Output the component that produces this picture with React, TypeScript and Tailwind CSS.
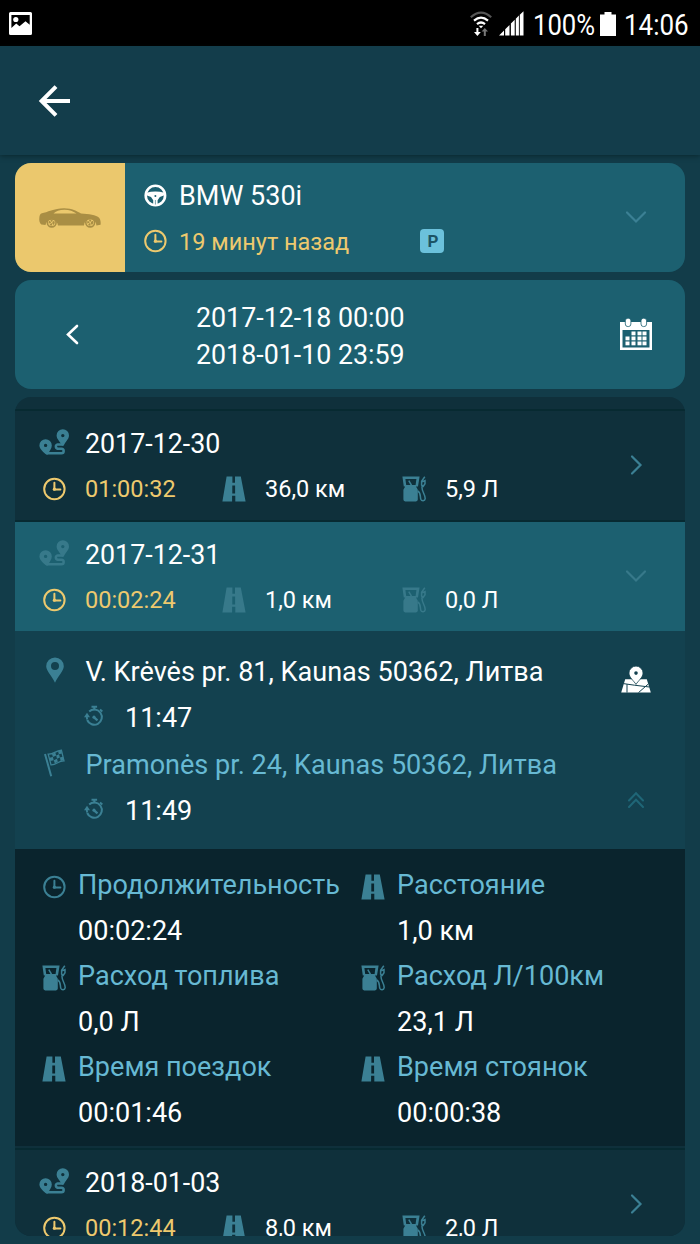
import type { ReactNode } from "react";
import clsx from "clsx";

type IconProps = { className?: string };

function ClockIcon({ className }: IconProps) {
  return (
    <svg viewBox="0 0 24 24" className={clsx("h-6 w-6", className)} fill="none" stroke="currentColor" strokeWidth="2" aria-hidden>
      <circle cx="12.4" cy="12" r="10.2" />
      <path d="M12.4 5.8v6.6h6" strokeLinecap="round" />
      <circle cx="12.4" cy="12.2" r="1.6" fill="currentColor" stroke="none" />
    </svg>
  );
}

function RoadIcon({ className }: IconProps) {
  return (
    <svg viewBox="0 0 24 26" className={clsx("h-[26px] w-6", className)} fill="currentColor" aria-hidden>
      <path d="M4.6.6h5.8v6.2H13V.6h5.8l4.8 24.8H13.3v-5.6h-3.2v5.6H.4zM10.3 9.4v8h2.8v-8z" fillRule="evenodd" />
    </svg>
  );
}

function FuelIcon({ className }: IconProps) {
  return (
    <svg viewBox="0 0 24 26" className={clsx("h-[26px] w-6", className)} aria-hidden>
      <path
        d="M.4.6h17.2l-1.6 10h-2l1.8 3.2v9.8q0 1.8-1.8 1.8H3.2q-1.8 0-1.8-1.8v-9.8l1.8-3.2h-1.4zM3.4 3l.8 6h9.4l.8-6z"
        fill="currentColor"
        fillRule="evenodd"
      />
      <path d="M6.8 4.6l2.6 4.6" stroke="currentColor" strokeWidth="1.5" />
      <path
        d="M22.8.8l-3.200 4.400v4l1.600 1.200 1.800-2.600V4.600l-2.600 1.200M20 10.400c-.6 5 3.400 8 3.200 12.200-.4 2.800-3.600 2.600-4.400.6-.8-2.400.2-6.400-3-8.200"
        fill="none"
        stroke="currentColor"
        strokeWidth="1.5"
      />
    </svg>
  );
}

function RouteIcon({ className }: IconProps) {
  return (
    <svg viewBox="0 0 30 26" className={clsx("h-[26px] w-[30px]", className)} aria-hidden>
      <path
        d="M6.6 10.200a6.200 6.200 0 0 1 6.200 6.200c0 3.200-2.400 5.400-4 9.200H7.400C5.200 24 .4 19.900.4 16.400a6.200 6.200 0 0 1 6.200-6.200zm0 4.500a1.700 1.700 0 1 0 0 3.400 1.700 1.700 0 0 0 0-3.400z"
        fill="currentColor"
        fillRule="evenodd"
      />
      <path
        d="M23.800.2A6.200 6.200 0 0 1 30 6.400c0 3.800-3.800 6.200-5.400 10.400H23c-1.600-4.200-5.400-6.600-5.400-10.400A6.200 6.200 0 0 1 23.800.2zm0 4.700a1.700 1.700 0 1 0 0 3.400 1.700 1.700 0 0 0 0-3.400z"
        fill="currentColor"
        fillRule="evenodd"
      />
      <path d="M23.800 15.400h-5.200a2.200 2.200 0 0 0 0 4.300h3.800a2.300 2.300 0 0 1 0 4.600h-15" fill="none" stroke="currentColor" strokeWidth="2.5" />
    </svg>
  );
}

function StopwatchIcon() {
  return (
    <svg viewBox="0 0 20 22" className="h-[22px] w-5" fill="none" stroke="currentColor" strokeWidth="2" aria-hidden>
      <path d="M5.2 6.400a7.600 7.600 0 1 1-2 8.600" />
      <path d="M3.2 14.500A8 8 0 0 1 3 10.200" />
      <path d="M0 12.300l3-4.500 3 4.500z" fill="currentColor" stroke="none" />
      <path d="M7.500 1.700h5.600M10.300 1.700v3.500M16 4.500l2.300 2" />
      <path d="M10.300 12.600l3.200 2.800" strokeWidth="2.2" />
      <circle cx="10" cy="12.2" r="1.6" fill="currentColor" stroke="none" />
    </svg>
  );
}

function PinIcon() {
  return (
    <svg viewBox="0 0 18 26" className="h-[26px] w-[18px]" fill="currentColor" aria-hidden>
      <path d="M9 .5a8.800 8.800 0 0 1 8.800 8.800C17.800 14 12 19 9 25.800 6 19 .2 14 .2 9.300A8.800 8.800 0 0 1 9 .5zm0 4.600a4 4 0 1 0 0 8 4 4 0 0 0 0-8z" fillRule="evenodd" />
    </svg>
  );
}

function FlagIcon() {
  return (
    <svg viewBox="0 0 21 28" className="h-7 w-[21px]" fill="currentColor" aria-hidden>
      <path d="M1 5l6.200 22.200" stroke="currentColor" strokeWidth="2" />
      <path d="M4.200 5.200c5.600.4 6.800-3.400 13.200-4l2.600 10.600c-6.400 0-7.400 4.400-13 4z" fill="none" stroke="currentColor" strokeWidth="1.3" />
      <path d="M8 5l3.300-1.500.9 3.100-3.300 1.500zM14 2.300l3.200-.9.800 3.100-3.100.8zM5.400 8.800l3.500-.7.8 3.100-3.400.8zM12.200 6.600l2.800-1.300.9 3.200-2.900 1.200zM9.800 11.200l3.200-1.500.8 3.100-3 1.700zM15.900 8.500l3.100-.7.800 3.500-3.100.6z" />
    </svg>
  );
}

function MapPinIcon() {
  return (
    <svg viewBox="0 0 30 27" className="h-[27px] w-[30px]" aria-hidden>
      <path d="M4.200 13.300h21.600l4 13.300H.2z" fill="#fff" />
      <path d="M2.400 17.600l11 1.600 15 1.800M6 18.200v8.400M17.500 26.600l9.800-8.600" stroke="#13414f" strokeWidth="1" fill="none" />
      <path
        d="M15 .1a7 7 0 0 1 7 7c0 4.400-4.900 7.800-7 11.300-2.100-3.500-7-6.900-7-11.300a7 7 0 0 1 7-7z"
        fill="#fff"
        stroke="#13414f"
        strokeWidth=".8"
      />
      <circle cx="15" cy="7.1" r="1.8" fill="#13414f" />
    </svg>
  );
}

function WheelIcon() {
  return (
    <svg viewBox="0 0 24 24" className="h-6 w-6 text-white" aria-hidden>
      <circle cx="12.4" cy="11.5" r="9.7" fill="none" stroke="currentColor" strokeWidth="2.6" />
      <path d="M3.400 8.700q9-2.400 18 0v2.600l-4.600 1.800-2.200 3.200v4.200h-4.400v-4.200L8 13.100l-4.600-1.800z" fill="currentColor" />
      <circle cx="12.4" cy="12.1" r="1" fill="#1c6070" />
      <path d="M12.400 16v4.500" stroke="#1c6070" strokeWidth=".6" />
    </svg>
  );
}

function CarIcon() {
  return (
    <svg viewBox="0 0 62 20" className="h-5 w-[62px] text-[#a98e44]" aria-hidden>
      <path
        d="M.3 10c.1-2.500 1-4.300 2.600-4.700C8 4.600 15 .3 25 .3c8.500 0 12.500 2.800 17 5.300 8 .3 15 1.400 18.300 4.400 1.300 1.800 1.600 4.500 1.300 6.700l-4.200.7a6.200 6.200 0 0 0-12.400 0H19a6.300 6.300 0 0 0-12.500-.4l-4.200-.6C.5 15 0 12.500.3 10zM14.500 5.400h23C34 3.400 30.500 1.700 25.500 1.700c-5 0-8.800 1.600-11 3.700z"
        fill="currentColor"
        fillRule="evenodd"
      />
      {[12.7, 51.2].map((cx) => (
        <g key={cx}>
          <circle cx={cx} cy="14.5" r="4.4" fill="none" stroke="currentColor" strokeWidth="1.6" />
          <circle cx={cx} cy="14.5" r="1.9" fill="none" stroke="currentColor" strokeWidth="2.2" strokeDasharray="1.6 .8" />
        </g>
      ))}
    </svg>
  );
}

function CalendarIcon() {
  const cells = [
    [12, 14], [18, 14], [23, 14],
    [6, 19], [12, 19], [18, 19], [23, 19],
    [6, 24], [12, 24], [18, 24], [23, 24],
  ];
  return (
    <svg viewBox="0 0 32 33" className="h-[33px] w-8" fill="#fff" aria-hidden>
      <path d="M0 4h32v28H0zM2.500 12v17.500h27V12z" fillRule="evenodd" />
      <rect x="5.3" y=".2" width="5.6" height="8.4" rx="2.6" stroke="#1c6070" strokeWidth=".8" />
      <rect x="21" y=".2" width="5.6" height="8.4" rx="2.6" stroke="#1c6070" strokeWidth=".8" />
      {cells.map(([x, y]) => (
        <rect key={`${x}-${y}`} x={x - 0.5} y={y - 0.5} width="4" height="3.8" />
      ))}
    </svg>
  );
}

const chevronPaths = {
  left: "M15 3L6 11.500 15 20",
  right: "M8 3.500l8.500 8.500L8 20.500",
  down: "M3 7.500l9 9 9-9",
};

function Chevron({ dir, className }: IconProps & { dir: keyof typeof chevronPaths }) {
  return (
    <svg viewBox="0 0 24 24" className={clsx("h-6 w-6", className)} fill="none" stroke="currentColor" strokeWidth="2.2" strokeLinecap="round" aria-hidden>
      <path d={chevronPaths[dir]} />
    </svg>
  );
}

function StatusBar() {
  return (
    <div className="flex h-[46px] items-center justify-between bg-black pl-[9px] pr-[11px] text-white">
      <svg viewBox="0 0 23 23" className="mt-px h-[23px] w-[23px]" aria-hidden>
        <path d="M1.500 0h20Q23 0 23 1.500v20q0 1.500-1.500 1.500h-20Q0 23 0 21.500v-20Q0 0 1.500 0zM2.400 3v13l4.800-4.400 3.300 2.600 6-5 4.200 3.500V3z" fill="#fff" fillRule="evenodd" />
        <circle cx="6.8" cy="7.5" r="2.6" fill="#fff" />
      </svg>
      <div className="flex items-center pt-px">
        <svg viewBox="0 0 22 26" className="h-[26px] w-[22px]" fill="none" stroke="#fff" strokeWidth="2.2" aria-hidden>
          <path d="M.8 6.300Q11-3 21.200 6.300" stroke="#555" />
          <path d="M4 9.700q7-6 14 0M7 13.200q4-3.400 8 0" />
          <path d="M8.700 14.800h4.600L11 17.300z" fill="#fff" stroke="none" />
          <path d="M7.400 17v5" strokeWidth="2" />
          <path d="M4 21h6.800l-3.400 4z" fill="#fff" stroke="none" />
          <path d="M14.800 20v5" stroke="#777" strokeWidth="2" />
          <path d="M11.600 20.500h6.400L14.800 17z" fill="#777" stroke="none" />
        </svg>
        <svg viewBox="0 0 25 25" className="ml-[7px] h-[25px] w-[25px]" fill="#fff" aria-hidden>
          <path d="M0 24.500l5-5v5zM6.200 18.300l4.300-4.300v10.500H6.200zM11.900 12.600l3.800-3.800v15.700h-3.800zM16.800 7.700L19.900 4.600v19.900h-3.100zM20.800 3.800L24.500.3v24.200h-3.700z" />
        </svg>
        <span className="ml-[9px] mt-[5px] w-[61px] origin-left scale-x-[0.87] whitespace-nowrap text-[29.5px] leading-none">100%</span>
        <svg viewBox="0 0 16 24" className="ml-1.5 h-6 w-4" fill="#fff" aria-hidden>
          <path d="M4.500 0h7v2.400H16V24H0V2.400h4.500z" />
        </svg>
        <span className="ml-2 mt-[5px] w-[65px] origin-left scale-x-[0.88] whitespace-nowrap text-[29.5px] leading-none">14:06</span>
      </div>
    </div>
  );
}

function Metric({ icon, children, className }: { icon: ReactNode; children: ReactNode; className?: string }) {
  return (
    <div className="flex w-[180px] items-center">
      <span className="flex w-[30px] justify-center">{icon}</span>
      <span className={clsx("ml-4 whitespace-nowrap text-[23.5px] leading-7", className)}>{children}</span>
    </div>
  );
}

type Trip = { date: string; time: string; distance: string; fuel: string; open?: boolean };

function TripRow({ date, time, distance, fuel, open }: Trip) {
  const tone = open ? "text-[#37798a]" : "text-[#3b8094]";
  return (
    <div className={clsx("flex h-[111px] shrink-0 items-center border-t-2 border-[#072a31] pl-6", open ? "bg-[#1c6070]" : "bg-[#0f303b]")}>
      <div className="h-full w-[540px] pt-4">
        <div className="flex h-8 items-center">
          <RouteIcon className={clsx("mb-0.5", tone)} />
          <span className="ml-4 mt-0.5 text-[26.8px] leading-8">{date}</span>
        </div>
        <div className="mt-3.5 flex h-8 items-center">
          <Metric icon={<ClockIcon className="text-[#edc96e]" />} className="text-[#edc96e]">
            {time}
          </Metric>
          <Metric icon={<RoadIcon className={tone} />}>{distance}</Metric>
          <Metric icon={<FuelIcon className={tone} />}>{fuel}</Metric>
        </div>
      </div>
      <Chevron dir={open ? "down" : "right"} className={clsx("mb-0.5 ml-[45px]", open ? "text-[#37798a]" : "text-[#3b8094]")} />
    </div>
  );
}

const stats = [
  { icon: <ClockIcon />, label: "Продолжительность", value: "00:02:24" },
  { icon: <RoadIcon />, label: "Расстояние", value: "1,0 км" },
  { icon: <FuelIcon />, label: "Расход топлива", value: "0,0 Л" },
  { icon: <FuelIcon />, label: "Расход Л/100км", value: "23,1 Л" },
  { icon: <RoadIcon />, label: "Время поездок", value: "00:01:46" },
  { icon: <RoadIcon />, label: "Время стоянок", value: "00:00:38" },
];

function StopTime({ children }: { children: ReactNode }) {
  return (
    <div className="flex h-[46.7px] items-center pl-[45px]">
      <span className="-mt-1 text-[#3b8094]">
        <StopwatchIcon />
      </span>
      <span className="ml-[21px] text-[27px]">{children}</span>
    </div>
  );
}

function TripDetails() {
  return (
    <div className="flex h-[218px] shrink-0 bg-[#13414f] pl-6 pt-[17px]">
      <div className="w-[560px]">
        <div className="flex h-[46.7px] items-center">
          <span className="mb-0.5 flex w-[31px] justify-center text-[#3b8094]">
            <PinIcon />
          </span>
          <span className="ml-[15.5px] mt-0.5 whitespace-nowrap text-[27.05px]">V. Krėvės pr. 81, Kaunas 50362, Литва</span>
        </div>
        <StopTime>11:47</StopTime>
        <div className="flex h-[46.7px] items-center">
          <span className="mb-1 flex w-[31px] justify-center text-[#3b8094]">
            <FlagIcon />
          </span>
          <span className="ml-[15.5px] mt-0.5 whitespace-nowrap text-[27.05px] text-[#67b9d3]">Pramonės pr. 24, Kaunas 50362, Литва</span>
        </div>
        <StopTime>11:49</StopTime>
      </div>
      <div className="flex w-[74px] flex-col items-center justify-between pb-[41px] pt-[18px]">
        <MapPinIcon />
        <svg viewBox="0 0 16 16" className="h-4 w-4 text-[#1f6677]" fill="none" stroke="currentColor" strokeWidth="2" strokeLinecap="round" aria-hidden>
          <path d="M1 8.500l7-7.300 7 7.300M1 15l7-7.300L15 15" />
        </svg>
      </div>
    </div>
  );
}

function TripStats() {
  return (
    <div className="grid h-[299px] shrink-0 grid-cols-[319px_1fr] content-start border-b-2 border-[#0f303b] bg-[#0a242d] pl-6 pt-[12.5px]">
      {stats.map((s) => (
        <div key={s.label} className="flex h-[91.4px]">
          <span className="flex h-[50px] w-[30px] items-center justify-center text-[#3b8094]">{s.icon}</span>
          <div className="ml-[9px] whitespace-nowrap text-[27.05px] leading-[46px]">
            <div className="text-[#67b9d3]">{s.label}</div>
            <div>{s.value}</div>
          </div>
        </div>
      ))}
    </div>
  );
}

export default function App() {
  return (
    <div className="flex h-[1244px] w-[700px] flex-col overflow-hidden bg-[#123c49] font-[Roboto,sans-serif] text-white">
      <StatusBar />
      <header className="flex h-[109px] shrink-0 items-center bg-[#133d4b] pl-[38px] shadow-[0_1px_5px_rgba(0,20,20,0.5)]">
        <svg viewBox="0 0 33 32" className="h-8 w-[33px]" fill="none" stroke="currentColor" strokeWidth="4" aria-hidden>
          <path d="M32 16H4M18 1.600L3.600 16 18 30.400" />
        </svg>
      </header>

      <main className="flex min-h-0 flex-1 flex-col gap-2 px-[15px] py-2">
        <section className="flex h-[109px] shrink-0 overflow-hidden rounded-[16px] bg-[#1c6070]">
          <div className="flex w-[110px] items-center justify-center bg-[#ebc86d]">
            <CarIcon />
          </div>
          <div className="flex-1 pl-[18px] pt-[17px]">
            <div className="flex h-8 items-center gap-3">
              <WheelIcon />
              <span className="mt-px text-[27px]">BMW 530i</span>
            </div>
            <div className="mt-[13px] flex h-8 items-center text-[#edc96e]">
              <ClockIcon />
              <span className="ml-3 mt-[3px] w-[241px] whitespace-nowrap text-[23.5px]">19 минут назад</span>
              <span className="flex h-6 w-6 items-center justify-center rounded bg-[#6bc1db] pl-0.5 text-[17px] font-bold leading-none text-[#1c5364]">P</span>
            </div>
          </div>
          <Chevron dir="down" className="mb-0.5 mr-[37px] self-center text-[#3b8094]" />
        </section>

        <section className="flex h-[109px] shrink-0 items-center rounded-[16px] bg-[#1c6070] pl-[47px] pr-[33px]">
          <Chevron dir="left" className="stroke-[2.6]" />
          <div className="ml-[110px] mt-1 flex-1 text-[26.8px] leading-[37px]">
            <div>2017-12-18 00:00</div>
            <div>2018-01-10 23:59</div>
          </div>
          <CalendarIcon />
        </section>

        <section className="flex min-h-0 flex-1 flex-col overflow-hidden rounded-[16px] bg-[#0f303b] pt-3">
          <TripRow date="2017-12-30" time="01:00:32" distance="36,0 км" fuel="5,9 Л" />
          <TripRow date="2017-12-31" time="00:02:24" distance="1,0 км" fuel="0,0 Л" open />
          <TripDetails />
          <TripStats />
          <TripRow date="2018-01-03" time="00:12:44" distance="8,0 км" fuel="2,0 Л" />
        </section>
      </main>
    </div>
  );
}
